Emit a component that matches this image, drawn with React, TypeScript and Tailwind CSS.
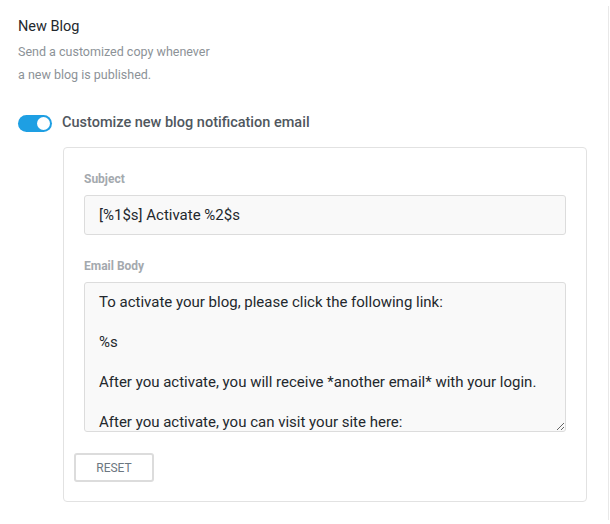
import { useState } from 'react'

const bodyText = `To activate your blog, please click the following link:

%s

After you activate, you will receive *another email* with your login.

After you activate, you can visit your site here:

%s`

export default function App() {
  const [enabled, setEnabled] = useState(true)
  const [subject, setSubject] = useState('[%1$s] Activate %2$s')
  const [body, setBody] = useState(bodyText)

  return (
    <div className="w-[610px] h-[524px] bg-white font-['Roboto',sans-serif] pt-[6px]">
      <div className="w-[609px] h-[514px] border-r border-[#e8e8e8] pl-[18px] pr-[21px]">
        {/* Header */}
        <h3 className="text-[14.5px] leading-[20px] text-[#23282d] font-normal pt-[11px]">New Blog</h3>
        <p className="mt-[3px] text-[12.5px] leading-[23px] text-[#8c9297]">
          Send a customized copy whenever
          <br />
          a new blog is published.
        </p>

        {/* Toggle */}
        <div className="mt-[27px] flex items-center gap-[10px]">
          <button
            onClick={() => setEnabled(!enabled)}
            className={`w-[34px] h-[17px] rounded-full flex items-center px-[2px] ${enabled ? 'bg-[#1e9fe3] justify-end' : 'bg-[#ccc] justify-start'}`}
          >
            <span className="w-[13px] h-[13px] rounded-full bg-white block" />
          </button>
          <span className="text-[14.5px] font-medium text-[#50575e] leading-[20px]">
            Customize new blog notification email
          </span>
        </div>

        {/* Card */}
        <div className="mt-[14px] ml-[45px] border border-[#e2e2e2] rounded-[4px] pt-[23px] pb-[20px] px-[20px] h-[355px]">
          <label className="block text-[12px] font-bold text-[#a4a9ae] leading-[16px]">Subject</label>
          <input
            value={subject}
            onChange={(e) => setSubject(e.target.value)}
            className="mt-[8px] w-full h-[40px] bg-[#f9f9f9] border border-[#dcdcdc] rounded-[3px] px-[14px] text-[15px] text-[#23282d] outline-none"
          />

          <label className="block mt-[23px] text-[12px] font-bold text-[#a4a9ae] leading-[16px]">Email Body</label>
          <textarea
            value={body}
            onChange={(e) => setBody(e.target.value)}
            className="mt-[8px] block w-full h-[150px] bg-[#f9f9f9] border border-[#dcdcdc] rounded-[3px] px-[14px] pt-[9px] text-[15px] leading-[20px] text-[#23282d] outline-none resize-y overflow-hidden"
          />

          <button className="mt-[21px] -ml-[10px] w-[80px] h-[29px] border-2 border-[#dcdcdc] rounded-[3px] text-[12px] text-[#6c7781] bg-white">
            RESET
          </button>
        </div>
      </div>
    </div>
  )
}
